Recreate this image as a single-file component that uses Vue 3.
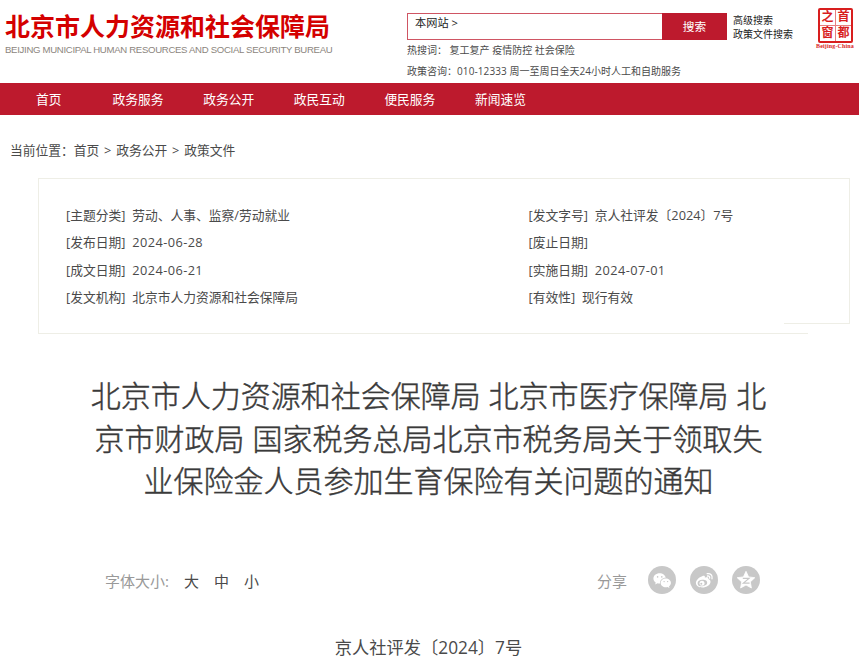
<script setup>
import { ref } from 'vue';

const keyword = ref('');
const fontSize = ref('中');

const navItems = ['首页', '政务服务', '政务公开', '政民互动', '便民服务', '新闻速览'];

const leftInfo = [
  { label: '主题分类', value: '劳动、人事、监察/劳动就业' },
  { label: '发布日期', value: '2024-06-28', date: true },
  { label: '成文日期', value: '2024-06-21', date: true },
  { label: '发文机构', value: '北京市人力资源和社会保障局' },
];

const rightInfo = [
  { label: '发文字号', value: '京人社评发〔2024〕7号' },
  { label: '废止日期', value: '' },
  { label: '实施日期', value: '2024-07-01', date: true },
  { label: '有效性', value: '现行有效' },
];

const titleLines = [
  '北京市人力资源和社会保障局 北京市医疗保障局 北',
  '京市财政局 国家税务总局北京市税务局关于领取失',
  '业保险金人员参加生育保险有关问题的通知',
];

const sizes = ['大', '中', '小'];
</script>

<template>
  <div class="page">
    <header class="header">
      <div class="logo">
        <div class="logo-cn">北京市人力资源和社会保障局</div>
        <div class="logo-en">BEIJING MUNICIPAL HUMAN RESOURCES AND SOCIAL SECURITY BUREAU</div>
      </div>

      <div class="search">
        <form class="search-bar" @submit.prevent>
          <span class="search-scope">本网站 &gt;</span>
          <input v-model="keyword" class="search-input" />
          <button type="submit" class="search-button">搜索</button>
        </form>
        <div class="hot-words">热搜词： 复工复产 疫情防控 社会保险</div>
        <div class="hotline">政策咨询：<span class="phone">010-12333</span> 周一至周日全天24小时人工和自助服务</div>
      </div>

      <div class="search-links">
        <a>高级搜索</a>
        <a>政策文件搜索</a>
      </div>

      <div class="seal">
        <div class="seal-grid">
          <span>之</span>
          <span>首</span>
          <span>窗</span>
          <span>都</span>
        </div>
        <div class="seal-text">Beijing-China</div>
      </div>
    </header>

    <nav class="nav">
      <a v-for="item in navItems" :key="item">{{ item }}</a>
    </nav>

    <div class="breadcrumb">
      当前位置：<a>首页</a><i>&gt;</i><a>政务公开</a><i>&gt;</i><a>政策文件</a>
    </div>

    <section class="info">
      <ul class="info-left">
        <li v-for="row in leftInfo" :key="row.label">
          <span class="info-label">[{{ row.label }}]</span>
          <span :class="{ date: row.date }">{{ row.value }}</span>
        </li>
      </ul>
      <ul>
        <li v-for="row in rightInfo" :key="row.label">
          <span class="info-label">[{{ row.label }}]</span>
          <span :class="{ date: row.date }">{{ row.value }}</span>
        </li>
      </ul>
    </section>

    <h1 class="title">
      <span v-for="line in titleLines" :key="line">{{ line }}</span>
    </h1>

    <div class="tools">
      <div class="font-size">
        <span class="tools-label">字体大小:</span>
        <a v-for="size in sizes" :key="size" @click="fontSize = size">{{ size }}</a>
      </div>
      <div class="share">
        <span class="tools-label">分享</span>
        <!-- WeChat -->
        <svg viewBox="0 0 28 28">
          <circle cx="14" cy="14" r="14" fill="#c8c8c8" />
          <path d="M11.6 7.3c-3.5 0-6.2 2.3-6.2 5.2 0 1.7.9 3.1 2.3 4l-.5 2 2.3-1.2c.7.2 1.3.3 2.1.3h.6c-.6-3.3 2.2-5.8 5.5-5.8-.4-2.6-2.9-4.5-6.1-4.5z" fill="#fff" />
          <path d="M17.8 12.6c-2.9 0-5.1 1.9-5.1 4.3s2.3 4.3 5.1 4.3c.6 0 1.1-.1 1.7-.3l2 1-.5-1.7c1.1-.8 1.9-1.9 1.9-3.3 0-2.4-2.3-4.3-5.1-4.3z" fill="#fff" />
          <g fill="#c8c8c8">
            <circle cx="9.6" cy="10.9" r=".8" />
            <circle cx="13.8" cy="10.9" r=".8" />
            <circle cx="16.1" cy="15.6" r=".7" />
            <circle cx="19.6" cy="15.6" r=".7" />
          </g>
        </svg>
        <!-- Weibo -->
        <svg viewBox="0 0 28 28">
          <circle cx="14" cy="14" r="14" fill="#c8c8c8" />
          <path d="M12.2 10.2c1.7-.7 3.1-.4 2.7 1.5 2.1-.8 4-.6 3.4 1.4 1.4.4 2.2 1.2 2.2 2.6 0 3.1-3.8 5.8-8.2 5.8-3.7 0-6.4-1.8-6.4-4.7 0-2.5 3.2-5.6 6.3-6.6z" fill="#fff" />
          <ellipse cx="12.4" cy="17" rx="4.8" ry="3.2" fill="#c8c8c8" transform="rotate(-8 12.4 17)" />
          <circle cx="12" cy="17.2" r="2.5" fill="#fff" />
          <circle cx="11.3" cy="17.7" r="1" fill="#c8c8c8" />
          <path d="M17.2 7.7c3.2-.7 5.7 1.9 4.8 5.1M17.5 10c1.5-.3 2.5.8 2.1 2.2" fill="none" stroke="#fff" stroke-width="1.3" stroke-linecap="round" />
        </svg>
        <!-- Qzone -->
        <svg viewBox="0 0 28 28">
          <circle cx="14" cy="14" r="14" fill="#c8c8c8" />
          <path d="M14 5.3l2.6 5.6 6.2.8-4.5 4.2 1.1 6.1-5.4-3-5.4 3 1.1-6.1-4.5-4.2 6.2-.8z" fill="#fff" stroke="#fff" stroke-width=".8" stroke-linejoin="round" />
          <path d="M10.8 12.4h6.2l-5.6 4.7h6.2" fill="none" stroke="#c8c8c8" stroke-width="1.2" />
        </svg>
      </div>
    </div>

    <p class="doc-number">京人社评发〔2024〕7号</p>
  </div>
</template>

<style>
body {
  background: #fff;
}
</style>

<style scoped>
.page {
  width: 865px;
  height: 659px;
  overflow: hidden;
  font-family: "Open Sans", "Noto Sans CJK SC", sans-serif;
  font-size: 12.75px;
  color: #4a4a4a;
  white-space: nowrap;
}

.header {
  display: flex;
  height: 83px;
}

.logo {
  width: 402px;
  padding: 12px 0 0 5px;
}

.logo-cn {
  font-size: 25px;
  line-height: 29px;
  font-weight: 700;
  color: #d40000;
}

.logo-en {
  margin-top: 2px;
  font-family: "Liberation Sans", Arial, sans-serif;
  font-size: 9.6px;
  line-height: 13px;
  letter-spacing: -0.31px;
  color: #8b857d;
}

.search {
  width: 320px;
  padding-top: 13px;
  font-size: 10px;
}

.search-bar {
  display: flex;
  box-sizing: border-box;
  height: 27px;
  border: 1px solid #cf5563;
}

.search-scope {
  padding-left: 7px;
  font-size: 11.2px;
  line-height: 18px;
  color: #222;
}

.search-input {
  flex: 1;
  min-width: 0;
  padding: 0;
  border: none;
  outline: none;
  background: transparent;
}

.search-button {
  width: 65px;
  margin: -1px;
  padding: 0 0 2px;
  border: none;
  background: #bd1a2d;
  color: #fff;
  font-family: inherit;
  font-size: 11.7px;
}

.hot-words {
  margin-top: 3px;
  line-height: 15px;
}

.hotline {
  margin-top: 6px;
  line-height: 15px;
}

.phone {
  letter-spacing: 0.1px;
}

.search-links {
  display: flex;
  flex-direction: column;
  width: 83px;
  padding: 12.5px 0 0 6px;
  font-size: 10px;
  line-height: 14px;
  color: #222;
}

.seal {
  width: 40px;
  padding-top: 8px;
  color: #d81e1e;
  font-family: "Liberation Serif", "Noto Sans CJK SC", serif;
}

.seal-grid {
  display: grid;
  grid-template-columns: 15px 15px;
  grid-template-rows: 15px 15px;
  gap: 1px;
  width: 31px;
  margin-left: 2px;
  border: 2px solid #d81e1e;
  border-radius: 2px;
  background: #e88080;
}

.seal-grid span {
  background: #fff;
  font-size: 12px;
  line-height: 15px;
  font-weight: 700;
  text-align: center;
}

.seal-text {
  width: 40px;
  font-size: 6px;
  line-height: 6px;
  font-weight: 700;
  letter-spacing: 0.15px;
}

.nav {
  display: flex;
  gap: 39.6px;
  box-sizing: border-box;
  width: 859px;
  height: 32px;
  padding-left: 36px;
  background: #bd1a2d;
  color: #fff;
  line-height: 33px;
}

.nav a:first-child {
  margin-right: 11.5px;
}

.breadcrumb {
  padding: 25px 0 0 10px;
  line-height: 20px;
}

.breadcrumb i {
  display: inline-block;
  width: 17px;
  font-style: normal;
  text-align: center;
}

.info {
  position: relative;
  display: flex;
  box-sizing: border-box;
  width: 812px;
  height: 156px;
  margin: 18px 0 0 38px;
  padding: 23px 0 0 27px;
  border-top: 1px solid #eeeee6;
  border-left: 1px solid #eeeee6;
}

.info::before {
  content: "";
  position: absolute;
  top: 0;
  right: 0;
  width: 65px;
  height: 144px;
  border-right: 1px solid #eeeee6;
  border-bottom: 1px solid #eeeee6;
}

.info::after {
  content: "";
  position: absolute;
  bottom: 0;
  left: 0;
  width: 769px;
  height: 1px;
  background: #eeeee6;
}

.info ul {
  margin: 0;
  padding: 0;
  list-style: none;
}

.info .info-left {
  width: 462.5px;
}

.info li {
  display: flex;
  height: 27.3px;
  line-height: 27.3px;
}

.info-label {
  margin-right: 7px;
}

.date {
  letter-spacing: 0.42px;
}

.title {
  display: flex;
  flex-direction: column;
  align-items: center;
  width: 857px;
  margin: 41px 0 0;
  font-size: 30px;
  line-height: 42.5px;
  font-weight: 300;
  color: #3a3a3a;
  -webkit-text-stroke: 0.45px #3a3a3a;
}

.tools {
  display: flex;
  justify-content: space-between;
  align-items: center;
  height: 28px;
  margin: 63px 105px 0;
  font-size: 15px;
}

.tools-label {
  color: #999;
}

.font-size {
  display: flex;
  gap: 15px;
  padding-top: 2px;
}

.share {
  display: flex;
  align-items: center;
  gap: 14px;
}

.share .tools-label {
  margin-right: 7px;
  padding-top: 2px;
}

.share svg {
  display: block;
  width: 28px;
  height: 28px;
}

.doc-number {
  width: 857px;
  margin: 42px 0 0;
  font-size: 17.25px;
  line-height: 24px;
  text-align: center;
}
</style>
